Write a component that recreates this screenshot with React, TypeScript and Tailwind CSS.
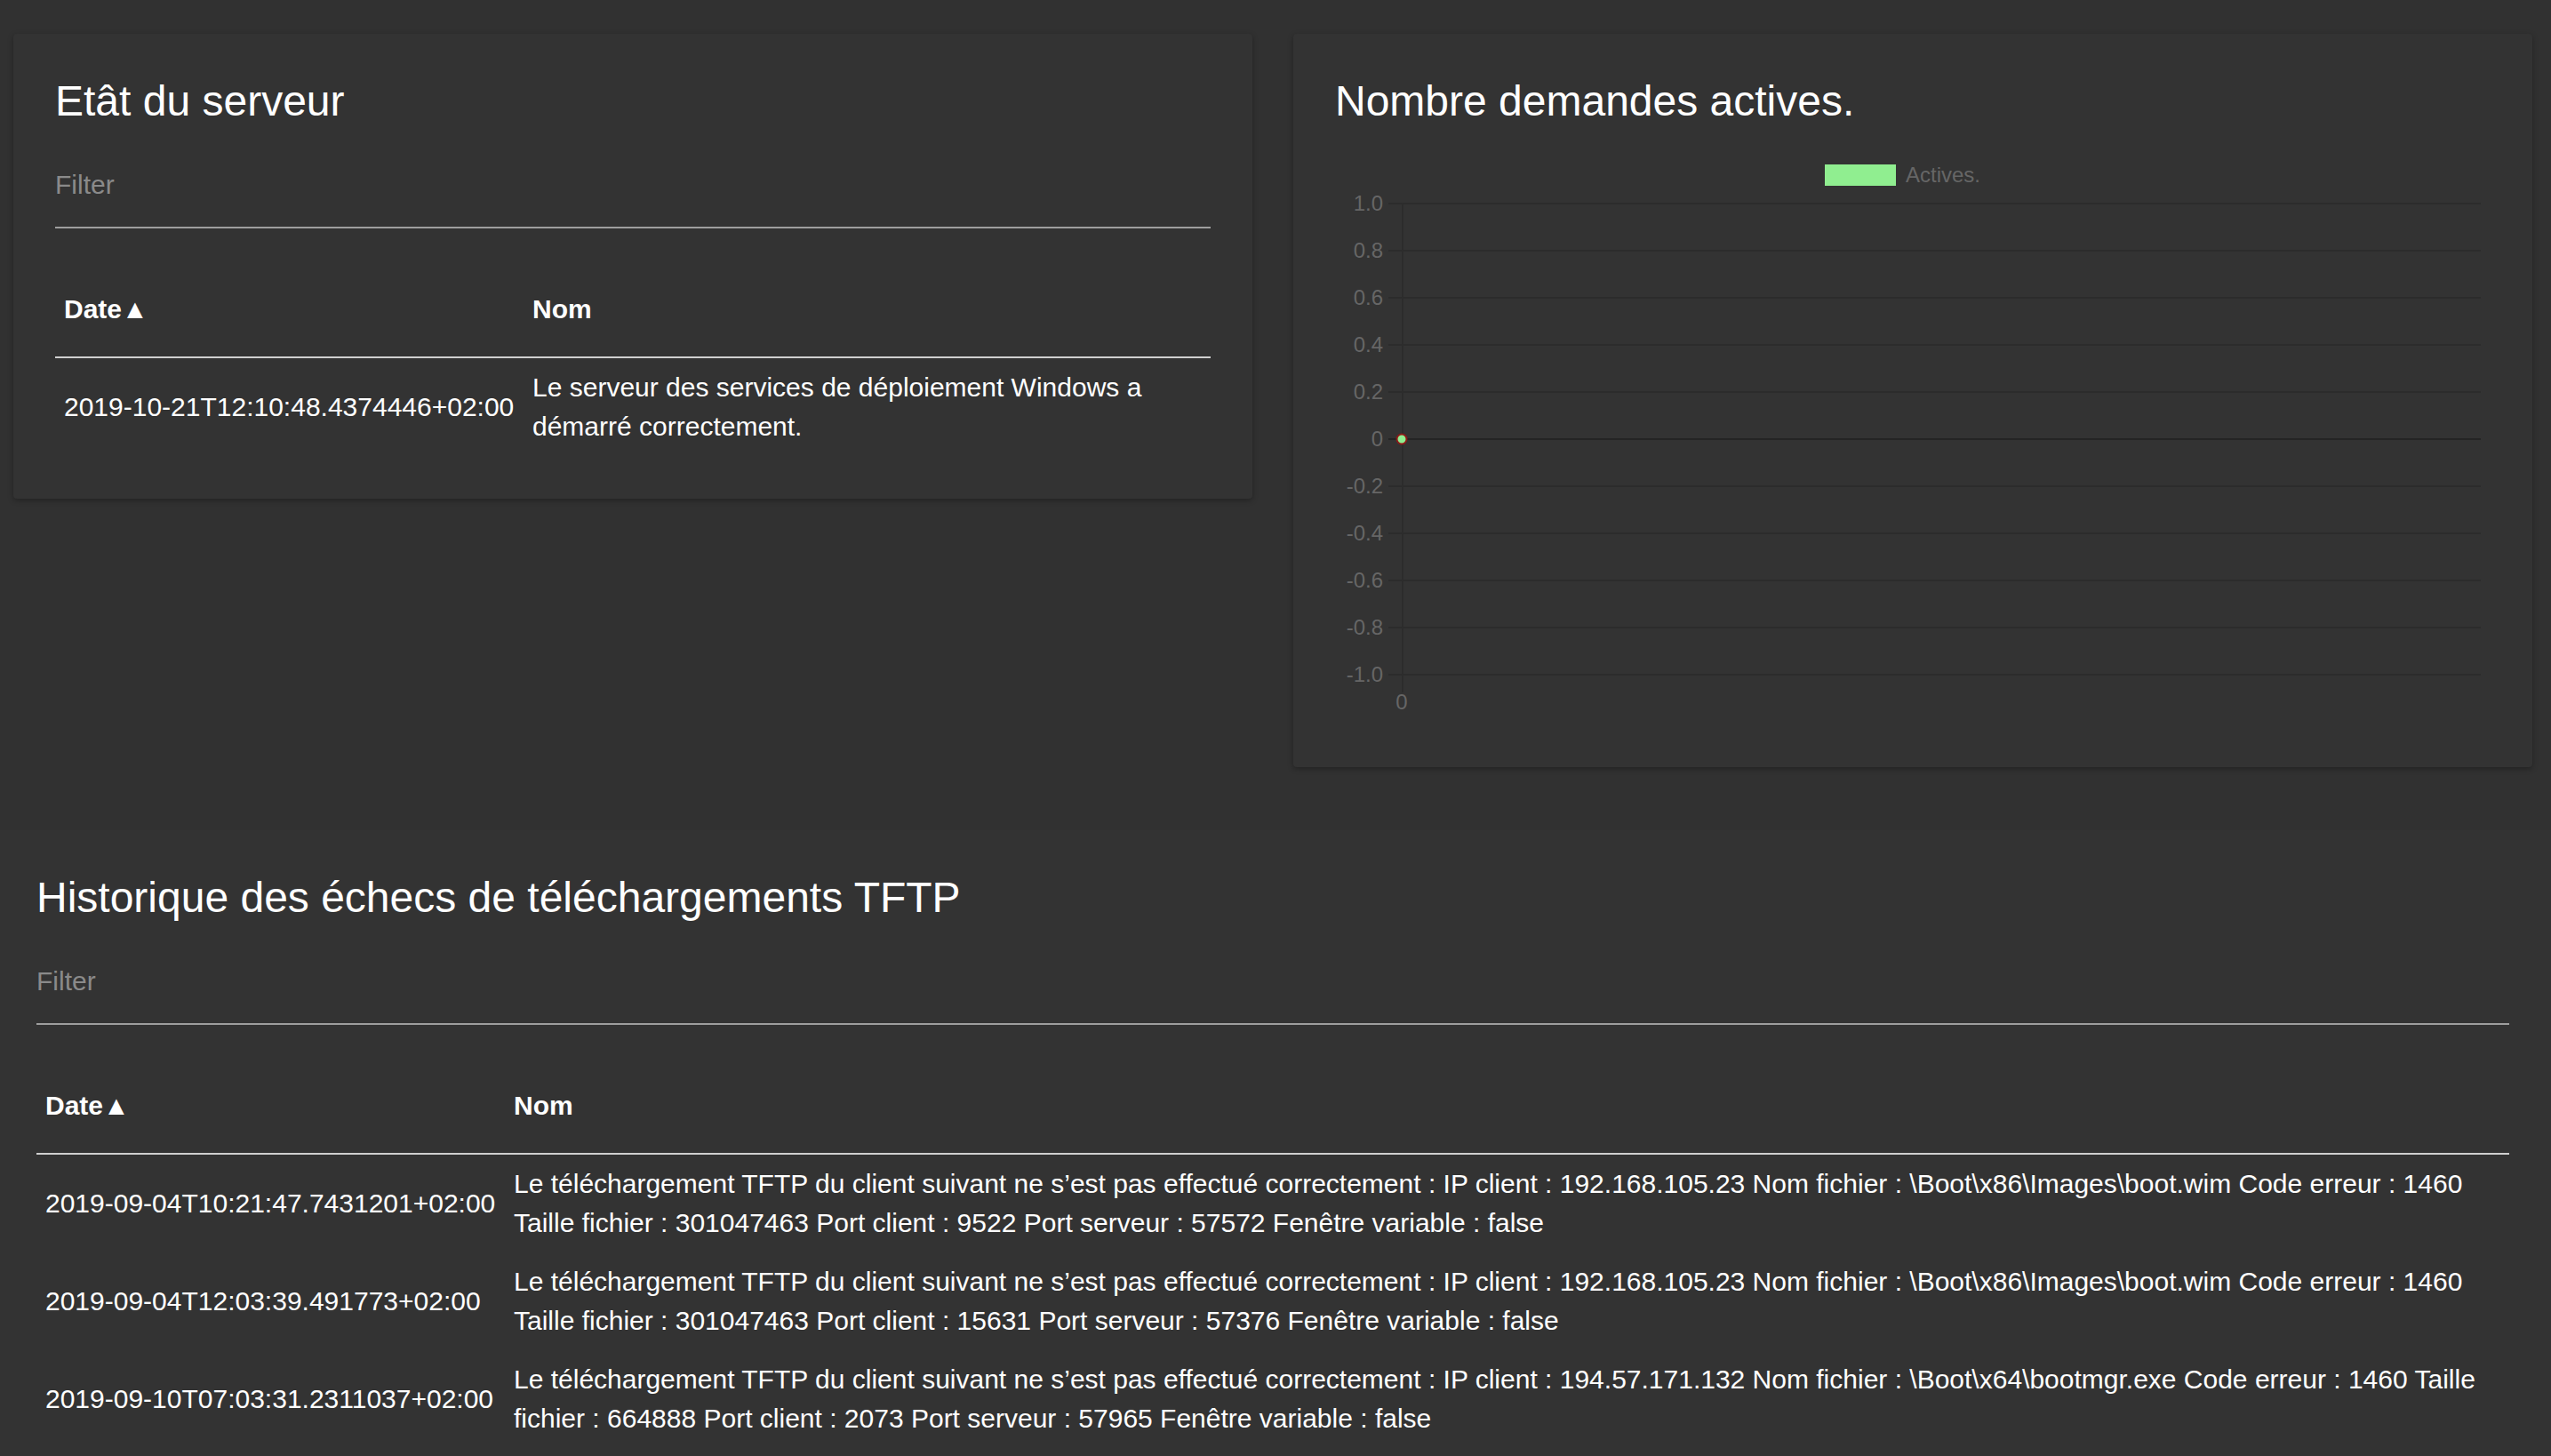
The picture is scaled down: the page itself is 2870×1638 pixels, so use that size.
import React from 'react';

interface Row {
  date: string;
  name: string;
}

const serverRows: Row[] = [
  {
    date: '2019-10-21T12:10:48.4374446+02:00',
    name: 'Le serveur des services de déploiement Windows a démarré correctement.',
  },
];

const tftpRows: Row[] = [
  {
    date: '2019-09-04T10:21:47.7431201+02:00',
    name: 'Le téléchargement TFTP du client suivant ne s’est pas effectué correctement : IP client : 192.168.105.23 Nom fichier : \\Boot\\x86\\Images\\boot.wim Code erreur : 1460 Taille fichier : 301047463 Port client : 9522 Port serveur : 57572 Fenêtre variable : false',
  },
  {
    date: '2019-09-04T12:03:39.491773+02:00',
    name: 'Le téléchargement TFTP du client suivant ne s’est pas effectué correctement : IP client : 192.168.105.23 Nom fichier : \\Boot\\x86\\Images\\boot.wim Code erreur : 1460 Taille fichier : 301047463 Port client : 15631 Port serveur : 57376 Fenêtre variable : false',
  },
  {
    date: '2019-09-10T07:03:31.2311037+02:00',
    name: 'Le téléchargement TFTP du client suivant ne s’est pas effectué correctement : IP client : 194.57.171.132 Nom fichier : \\Boot\\x64\\bootmgr.exe Code erreur : 1460 Taille fichier : 664888 Port client : 2073 Port serveur : 57965 Fenêtre variable : false',
  },
];

const Title = ({ children }: { children: React.ReactNode }) => (
  <h2 className="text-[48px] leading-[56px] font-light text-white">{children}</h2>
);

const Filter = () => (
  <div className="mt-[43px] pb-[25px] border-b-2 border-[#9e9e9e]">
    <input
      type="text"
      placeholder="Filter"
      className="block w-full h-[45px] bg-transparent text-[30px] leading-[45px] text-white placeholder:text-[#8a8a8a] outline-none"
    />
  </div>
);

const DataTable = ({ rows }: { rows: Row[] }) => (
  <table className="mt-[36px] w-full border-collapse text-[30px] leading-[44px] text-white">
    <colgroup>
      <col className="w-[527px]" />
      <col />
    </colgroup>
    <thead>
      <tr className="border-b-2 border-[#d0d0d0]">
        <th className="px-[10px] pt-[33px] pb-[31px] text-left font-bold">Date▲</th>
        <th className="px-[10px] pt-[33px] pb-[31px] text-left font-bold">Nom</th>
      </tr>
    </thead>
    <tbody>
      {rows.map((row) => (
        <tr key={row.date}>
          <td className="px-[10px] py-[11px] align-middle whitespace-nowrap">{row.date}</td>
          <td className="px-[10px] py-[11px] align-middle">{row.name}</td>
        </tr>
      ))}
    </tbody>
  </table>
);

const Card = ({ children }: { children: React.ReactNode }) => (
  <div className="bg-[#333333] rounded-[4px] shadow-[0_2px_6px_rgba(0,0,0,0.3)] px-[47px] pt-[48px] pb-[48px]">
    {children}
  </div>
);

const ticks = ['1.0', '0.8', '0.6', '0.4', '0.2', '0', '-0.2', '-0.4', '-0.6', '-0.8', '-1.0'];

const ActiveChart = () => (
  <svg width="1298" height="655" className="mt-[18px] block font-['Liberation_Sans',Arial,sans-serif]">
    <rect x="551" y="25" width="80" height="24" fill="#90ee90" />
    <text x="642" y="45" fontSize="24" fill="#666666">Actives.</text>
    {ticks.map((t, i) => {
      const y = 69 + i * 53;
      return (
        <g key={t}>
          <line
            x1="60"
            x2="1289"
            y1={y}
            y2={y}
            stroke={t === '0' ? '#242424' : '#2c2c2c'}
            strokeWidth="2"
          />
          <text x="54" y={y + 8} fontSize="24" fill="#666666" textAnchor="end">
            {t}
          </text>
        </g>
      );
    })}
    <line x1="76" x2="76" y1="69" y2="619" stroke="#2c2c2c" strokeWidth="2" />
    <text x="75" y="638" fontSize="24" fill="#666666" textAnchor="middle">0</text>
    <circle cx="75" cy="334" r="5.5" fill="#90ee90" stroke="#8b1a1a" strokeWidth="2" />
  </svg>
);

export default function App() {
  return (
    <div className="min-h-screen flex flex-col bg-[#313131] font-['Liberation_Sans',Arial,sans-serif]">
      <div className="grid grid-cols-2 gap-[46px] items-start pl-[15px] pr-[21px] pt-[38px]">
        <Card>
          <Title>Etât du serveur</Title>
          <Filter />
          <DataTable rows={serverRows} />
        </Card>
        <Card>
          <Title>Nombre demandes actives.</Title>
          <ActiveChart />
        </Card>
      </div>
      <section className="flex-1 mt-[71px] bg-[#333333] pl-[41px] pr-[47px] pt-[48px] pb-[10px]">
        <Title>Historique des échecs de téléchargements TFTP</Title>
        <Filter />
        <DataTable rows={tftpRows} />
      </section>
    </div>
  );
}
